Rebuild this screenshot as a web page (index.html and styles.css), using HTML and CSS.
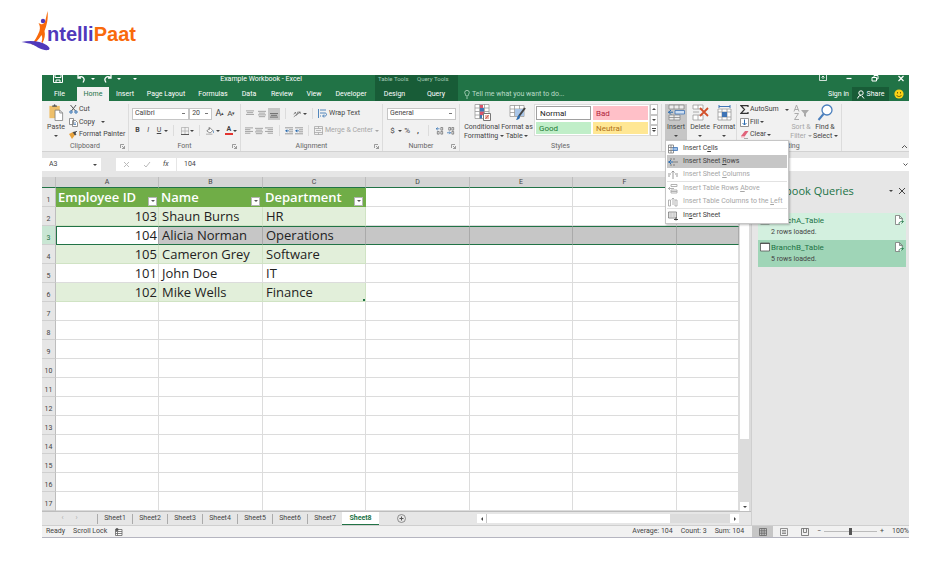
FILE: index.html
```html
<!DOCTYPE html>
<html lang="en">
<head>
    <meta charset="utf-8">
    <title>Example Workbook - Excel</title>
    <link rel="stylesheet" href="styles.css">
</head>
<body>

<!-- shared icons -->
<svg class="sprite" aria-hidden="true">
    <symbol id="alignLines" viewBox="0 0 9 9"><path d="M0 1.5h9M1 3.5h7M0 5.5h9M1 7.5h7" stroke="#999" stroke-width="1"/></symbol>
    <symbol id="indent" viewBox="0 0 10 9"><path d="M0 .5h10M5 3h5M5 5.5h5M0 8h10" stroke="#888"/><path d="M0 4.3l3-2v4z" fill="#2b6cb0"/><path d="M3 4.3h2" stroke="#2b6cb0"/></symbol>
    <symbol id="launcher" viewBox="0 0 5 5"><path d="M.5 4V.5H4M2 2l2.5 2.5M4.5 2v2.5H2" fill="none" stroke="#777" stroke-width=".7"/></symbol>
    <symbol id="sheetOut" viewBox="0 0 9 11"><path d="M5 9.500H.5v-9h4l3 3v1.500M4.500.5v3h3" fill="#fff" stroke="#777" stroke-width=".8"/><path d="M4 9c0-2 1-2.500 4-2.500M6.500 5L8.500 6.500l-2 2" fill="none" stroke="#217346" stroke-width=".8"/></symbol>
</svg>

<header class="brand">
    <svg class="brand-mark" viewBox="0 0 28 40">
        <path d="M26 0c1 8-1 15-3 20 1 4 0 8-2 12l-1-1c1-3 1-5 0-7-3 5-7 9-10 10 3-4 6-9 8-14 1-4 0-6-1-8l2 1c2 1 4 0 5-4z" fill="#f96a0b"/>
        <circle cx="21.500" cy="10" r="2.200" fill="#5039bb"/>
        <path d="M0 31c9-2 19-1 25 3 3 2 4 4 2 5-6 1-11-3-15-5-4-2-8-2-12-3z" fill="#5039bb"/>
    </svg>
    <a class="brand-name" href="#">ntelli<span>Paat</span></a>
</header>

<main class="excel">

    <div class="titlebar">
        <div class="quick">
            <svg width="10" height="8" viewBox="0 0 10 8"><path d="M.5 0v7.500h9V0M2 0v2.500h6V0M3 7.500V5h4v2.500" fill="none" stroke="#fff"/></svg>
            <svg width="9" height="8" viewBox="0 0 9 8"><path d="M1 0v3h3M1 3c4-3 8 0 5 4.500" fill="none" stroke="#fff" stroke-width="1.300"/></svg>
            <span class="caret"></span>
            <svg width="9" height="8" viewBox="0 0 9 8"><path d="M8 0v3H5M8 3c-4-3-8 0-5 4.500" fill="none" stroke="#fff" stroke-width="1.300"/></svg>
            <span class="caret"></span>
            <span class="caret"></span>
            <span class="title">Example Workbook - Excel</span>
        </div>
        <span class="context context-table">Table Tools</span>
        <span class="context context-query">Query Tools</span>
        <div class="window-buttons">
            <svg width="8" height="7" viewBox="0 0 8 7"><path d="M.5 0v5.500h7V0M4 1v3M2.500 2.500L4 1l1.500 1.500" fill="none" stroke="#fff" stroke-width=".8"/></svg>
            <svg width="8" height="7" viewBox="0 0 8 7"><path d="M1.500 3.500h5" stroke="#fff" stroke-width="1.200"/></svg>
            <svg width="8" height="7" viewBox="0 0 8 7"><path d="M1 2.500h4.500V6H1zM3 2V.5h4V4H6" fill="none" stroke="#fff"/></svg>
            <svg width="8" height="7" viewBox="0 0 8 7"><path d="M1.500 1l5 5M6.500 1l-5 5" stroke="#fff" stroke-width="1.200"/></svg>
        </div>
    </div>

    <nav class="tabs">
        <button>File</button>
        <button class="current">Home</button>
        <button>Insert</button>
        <button>Page Layout</button>
        <button>Formulas</button>
        <button>Data</button>
        <button>Review</button>
        <button>View</button>
        <button>Developer</button>
        <button class="dark">Design</button>
        <button class="dark">Query</button>
        <div class="tell">
            <svg width="6" height="9" viewBox="0 0 6 9"><path d="M2 6C2 4.500.7 4 .7 2.600a2.300 2.200 0 0 1 4.600 0C5.300 4 4 4.500 4 6zM2 8h2" fill="none" stroke="#b9dcc8" stroke-width=".8"/></svg>
            Tell me what you want to do...
        </div>
        <button class="sign">Sign in</button>
        <button class="share">
            <svg width="8" height="9" viewBox="0 0 8 9"><circle cx="4" cy="3" r="2.200" fill="none" stroke="#fff"/><path d="M.7 8.500C1 6 2.500 5.500 4 5.500M5 6l2 2.500" fill="none" stroke="#fff"/></svg>
            Share
        </button>
        <svg class="smiley" width="10" height="10" viewBox="0 0 10 10"><circle cx="5" cy="5" r="4.600" fill="#fcd116"/><path d="M3.500 3v1.500M6.500 3v1.500M2.500 6c1 2 4 2 5 0" fill="none" stroke="#6b5200" stroke-width=".9"/></svg>
    </nav>

    <section class="ribbon">

        <div class="group clipboard">
            <div class="body">
                <button class="big">
                    <svg width="16" height="17" viewBox="0 0 16 18"><path d="M1 2h11v13H1z" fill="#eebf6a"/><path d="M4 3V1.500h1.500C6 0 7 0 7.500 1.500H9V3z" fill="#555"/><path d="M7 6.500h5l3 3v8H7z" fill="#fff" stroke="#777" stroke-width=".8"/><path d="M12 6.500v3h3" fill="none" stroke="#777" stroke-width=".8"/></svg>
                    Paste<span class="caret"></span>
                </button>
                <div class="stack">
                    <button><svg width="9" height="9" viewBox="0 0 9 9"><path d="M1.500 0l5 6M7 0L2.500 6" stroke="#555"/><circle cx="2" cy="7" r="1.200" fill="none" stroke="#2b6cb0"/><circle cx="7" cy="7" r="1.200" fill="none" stroke="#2b6cb0"/></svg>Cut</button>
                    <button><svg width="9" height="9" viewBox="0 0 9 9"><path d="M.5.5h4v6h-4zM3.500 2.500h3l2 2v4h-5z" fill="#fff" stroke="#777" stroke-width=".8"/><path d="M5 5h2M5 6.500h2" stroke="#2b6cb0" stroke-width=".7"/></svg>Copy <span class="caret spaced"></span></button>
                    <button><svg width="9" height="9" viewBox="0 0 9 9"><path d="M0 4l4-2 2 3-3 4z" fill="#e8a33d"/><path d="M4 2l2 3 1-.5L6 3l2-2" fill="#444" stroke="#444" stroke-width=".8"/></svg>Format Painter</button>
                </div>
            </div>
            <div class="label">Clipboard<svg class="launch"><use href="#launcher"/></svg></div>
        </div>

        <div class="group font">
            <div class="body rows">
                <div class="row">
                    <select class="w-font" aria-label="Font"><option>Calibri</option></select>
                    <select class="w-size" aria-label="Font size"><option>20</option></select>
                    <button class="tool grow">A<sup>▴</sup></button>
                    <button class="tool shrink">A<sup>▾</sup></button>
                </div>
                <div class="row">
                    <button class="tool"><b>B</b></button>
                    <button class="tool"><i>I</i></button>
                    <button class="tool"><u>U</u></button>
                    <span class="caret"></span>
                    <span class="split"></span>
                    <button class="tool"><svg width="9" height="9" viewBox="0 0 9 9"><path d="M.5.5h8v8h-8zM4.500 0v9M0 4.500h9" fill="none" stroke="#aaa" stroke-width=".8"/><path d="M0 8.500h9" stroke="#444"/></svg></button>
                    <span class="caret"></span>
                    <span class="split"></span>
                    <button class="tool"><svg width="10" height="10" viewBox="0 0 10 10"><path d="M1 5l4-4 3.500 3.500-3.500 3zM4 4V0" fill="#fff" stroke="#555" stroke-width=".8"/><path d="M9 4.500c1.500 2 0 3 0 3" stroke="#2b6cb0" fill="none"/><path d="M0 9h8" stroke="#bbb" stroke-width="1.500"/></svg></button>
                    <span class="caret"></span>
                    <button class="tool color">A</button>
                    <span class="caret"></span>
                </div>
            </div>
            <div class="label">Font<svg class="launch"><use href="#launcher"/></svg></div>
        </div>

        <div class="group align">
            <div class="body rows">
                <div class="row">
                    <button class="tool"><svg width="9" height="9" viewBox="0 0 9 9"><path d="M0 1h9M1 3h7M0 5h9" stroke="#999"/></svg></button>
                    <button class="tool"><svg width="9" height="9"><use href="#alignLines"/></svg></button>
                    <button class="tool pressed"><svg width="9" height="9" viewBox="0 0 9 9"><path d="M0 4h9M1 6h7M0 8h9" stroke="#666"/></svg></button>
                    <span class="split"></span>
                    <button class="tool"><svg width="10" height="9" viewBox="0 0 10 9"><path d="M1 8l8-6M6.500 2H9v2.500M1 5l2-3 1 3M5 2c2 0 1 3-1 4" fill="none" stroke="#555" stroke-width=".8"/></svg></button>
                    <span class="caret"></span>
                    <span class="split"></span>
                    <button class="wide"><svg width="9" height="9" viewBox="0 0 9 9"><path d="M.5 0v9M2 1h6M2 4h5c2 0 2 3 0 3H5M6 5.500L4.500 7 6 8.500M2 7h1" fill="none" stroke="#2b6cb0" stroke-width=".8"/></svg>Wrap Text</button>
                </div>
                <div class="row">
                    <button class="tool"><svg width="9" height="9" viewBox="0 0 9 9"><path d="M0 1h9M0 3h6M0 5h9M0 7h6" stroke="#999"/></svg></button>
                    <button class="tool"><svg width="9" height="9"><use href="#alignLines"/></svg></button>
                    <button class="tool"><svg width="9" height="9" viewBox="0 0 9 9"><path d="M0 1h9M3 3h6M0 5h9M3 7h6" stroke="#999"/></svg></button>
                    <span class="split"></span>
                    <button class="tool"><svg width="10" height="9"><use href="#indent"/></svg></button>
                    <button class="tool"><svg width="10" height="9"><use href="#indent"/></svg></button>
                    <span class="split thin"></span>
                    <button class="wide" disabled><svg width="9" height="9" viewBox="0 0 9 9"><path d="M.5.5h8v8h-8zM0 2.500h9M0 6.500h9M4.500 0v2.500M4.500 6.500V9M2 4.500h5" fill="none" stroke="#aaa" stroke-width=".8"/></svg>Merge &amp; Center <span class="caret"></span></button>
                </div>
            </div>
            <div class="label">Alignment<svg class="launch"><use href="#launcher"/></svg></div>
        </div>

        <div class="group number">
            <div class="body rows">
                <div class="row">
                    <select class="w-number" aria-label="Number format"><option>General</option></select>
                </div>
                <div class="row">
                    <button class="tool">$</button>
                    <span class="caret"></span>
                    <button class="tool">%</button>
                    <button class="tool"><b>,</b></button>
                    <span class="split"></span>
                    <button class="tool"><svg width="9" height="9" viewBox="0 0 9 9"><path d="M0 2h4M2 .5L.3 2 2 3.500" fill="none" stroke="#2b6cb0" stroke-width=".8"/><path d="M5.500.5h2v3h-2zM1.500 5h2v3h-2zM5.500 5h2v3h-2z" fill="none" stroke="#666" stroke-width=".8"/></svg></button>
                    <button class="tool"><svg width="9" height="9" viewBox="0 0 9 9"><path d="M0 6.500h4M2.500 5l1.500 1.500L2.500 8" fill="none" stroke="#2b6cb0" stroke-width=".8"/><path d="M2 .5h2v3H2zM5.500.5h2v3h-2zM5.500 5h2v3h-2z" fill="none" stroke="#666" stroke-width=".8"/></svg></button>
                </div>
            </div>
            <div class="label">Number<svg class="launch"><use href="#launcher"/></svg></div>
        </div>

        <div class="group styles">
            <div class="body">
                <button class="big">
                    <svg width="17" height="17" viewBox="0 0 17 17"><path d="M1 .5h14v14H1zM1 4h14M1 7.500h14M1 11h14M5.500 0v15M10.500 0v15" fill="#fff" stroke="#999" stroke-width=".8"/><path d="M6 1h3v3H6zM6 7.500h4V11H6z" fill="#d9536b"/><path d="M6 4h4v3.500H6zM6 11h2v3.500H6z" fill="#3f74b5"/><path d="M9.500 9.500h7v7h-7z" fill="#fff" stroke="#777"/><path d="M11 12h4M11 14h4M14.500 11l-3 4" stroke="#c43" stroke-width=".8"/></svg>
                    Conditional<br>Formatting <span class="caret inline"></span>
                </button>
                <button class="big">
                    <svg width="17" height="17" viewBox="0 0 17 17"><path d="M1 1.500h14v11H1zM1 5h14M1 8.500h14M5.500 1v11M10.500 1v11" fill="#fff" stroke="#999" stroke-width=".8"/><path d="M6 5h9v7H6z" fill="#a9c6e8"/><path d="M16 4l-6 8" stroke="#444" stroke-width="2"/><path d="M10 11c2 1 1 5-3 5 1-1 1-4 3-5z" fill="#2b6cb0"/></svg>
                    Format as<br>Table <span class="caret inline"></span>
                </button>
                <div class="gallery">
                    <button class="normal">Normal</button>
                    <button class="bad">Bad</button>
                    <button class="good">Good</button>
                    <button class="neutral">Neutral</button>
                </div>
                <div class="gallery-nav">
                    <button aria-label="Up"><span class="caret up"></span></button>
                    <button aria-label="Down"><span class="caret"></span></button>
                    <button aria-label="More"><span class="caret more"></span></button>
                </div>
            </div>
            <div class="label">Styles</div>
        </div>

        <div class="group cells" aria-label="Cells">
            <div class="body">
                <div class="insert">
                    <button class="big pressed">
                        <svg width="17" height="17" viewBox="0 0 17 17"><path d="M1 1h15v4H1zM1 11h11v5H1zM6 1v4M11 1v4M6 11v5M1 13.500h11" fill="#eee" stroke="#888" stroke-width=".8"/><path d="M7 6.500h9.500v3.500H7z" fill="#cfe0f3" stroke="#3f74b5" stroke-width=".8"/><path d="M0 8.200h5M3 6L.7 8.200 3 10.500" fill="none" stroke="#2b6cb0"/></svg>
                        Insert<span class="caret"></span>
                    </button>
                    <div class="menu">
                        <button><svg width="10" height="10" viewBox="0 0 10 10"><path d="M.5 1h5v8h-5zM.5 3.500h5M.5 6.500h5M3 1v8" fill="#fff" stroke="#777" stroke-width=".8"/><path d="M5 3.500h4.500v3H5z" fill="#9dbfe6" stroke="#3f74b5" stroke-width=".8"/></svg><span>Insert C<u>e</u>lls</span></button>
                        <button class="hover"><svg width="10" height="10" viewBox="0 0 10 10"><path d="M5 5h5M3 1v2M6 1v2M3 7v2M6 7v2" stroke="#777" stroke-width=".9"/><path d="M0 5h5M3 3L1 5l2 2" fill="none" stroke="#2b6cb0"/></svg><span>Insert Sheet <u>R</u>ows</span></button>
                        <button disabled><svg width="10" height="10" viewBox="0 0 10 10"><path d="M5 1v8M3.500 2.500L5 1l1.500 1.500M0 4h3M7 4h3M0 6h2M8 6h2" fill="none" stroke="#999"/></svg><span>Insert Sheet <u>C</u>olumns</span></button>
                        <button class="ruled" disabled><svg width="10" height="10" viewBox="0 0 10 10"><path d="M3 .5h6v2H3zM3 6h6v3H3zM3 7.500h6M0 4.500h6M2 3L.5 4.500 2 6" fill="none" stroke="#aaa" stroke-width=".9"/></svg><span>Insert Table Rows <u>A</u>bove</span></button>
                        <button disabled><svg width="10" height="10" viewBox="0 0 10 10"><path d="M.5 3h2v6h-2zM7 3h2v6H7zM5 1v7M3.500 2.500L5 1l1.500 1.500" fill="none" stroke="#aaa" stroke-width=".9"/></svg><span>Insert Table Columns to the <u>L</u>eft</span></button>
                        <button class="ruled"><svg width="10" height="10" viewBox="0 0 10 10"><path d="M.5 1h8v6h-8z" fill="#eee" stroke="#777" stroke-width=".8"/><path d="M.5 3h8M.5 5h8M3 1v6M6 1v6" stroke="#bbb" stroke-width=".6"/><path d="M6 8.500h4M8 6.500v3" stroke="#444"/></svg><span>In<u>s</u>ert Sheet</span></button>
                    </div>
                </div>
                <button class="big">
                    <svg width="17" height="17" viewBox="0 0 17 17"><path d="M1 1h10v4H1zM1 11h10v5H1zM6 1v4M6 11v5M1 8h6" fill="#fff" stroke="#999" stroke-width=".8"/><path d="M8 4l8 8M16 4l-8 8" stroke="#d2502a" stroke-width="1.800"/></svg>
                    Delete<span class="caret"></span>
                </button>
                <button class="big">
                    <svg width="17" height="17" viewBox="0 0 17 17"><path d="M2 5h13v11H2zM2 8h13M2 13h13M6 5v11M11 5v11" fill="#fff" stroke="#999" stroke-width=".8"/><path d="M6 8h5v5H6z" fill="#3f74b5"/><path d="M3 1v3M14 1v3M3 2.500h11" stroke="#3f74b5"/></svg>
                    Format<span class="caret"></span>
                </button>
            </div>
        </div>

        <div class="group editing">
            <div class="body">
                <div class="stack">
                    <button><svg width="9" height="9" viewBox="0 0 9 9"><path d="M8 2V.7H1L4.500 4.500 1 8.300h7V7" fill="none" stroke="#333" stroke-width="1.200"/></svg>AutoSum <span class="caret spaced"></span></button>
                    <button><svg width="9" height="9" viewBox="0 0 9 9"><path d="M.5.5h8v8h-8z" fill="#fff" stroke="#777" stroke-width=".8"/><path d="M4.500 1.500V7M2.500 5l2 2 2-2" fill="none" stroke="#2b6cb0"/></svg>Fill <span class="caret"></span></button>
                    <button><svg width="9" height="9" viewBox="0 0 9 9"><path d="M1 6l4-5h3.500L5 6z" fill="#e0637a"/><path d="M1 6h4v1.500H1z" fill="#f3b3be"/><path d="M4 8.500h4" stroke="#888" stroke-width=".7"/></svg>Clear <span class="caret"></span></button>
                </div>
                <button class="big" disabled>
                    <svg width="17" height="17" viewBox="0 0 17 17"><path d="M1 7.500L3.500 1 6 7.500M2 5.500h3M1.500 9.500h4l-4 6h4.500" fill="none" stroke="#aaa"/><path d="M8 6h8l-3 3.500V13l-2-1V9.500z" fill="#aaa"/></svg>
                    Sort &amp;<br>Filter <span class="caret inline"></span>
                </button>
                <button class="big">
                    <svg width="17" height="17" viewBox="0 0 17 17"><circle cx="10" cy="6" r="5" fill="#fff" stroke="#4a7fbd" stroke-width="1.300"/><path d="M6.500 10L1.500 16" stroke="#4a7fbd" stroke-width="2"/></svg>
                    Find &amp;<br>Select <span class="caret inline"></span>
                </button>
            </div>
            <div class="label">Editing</div>
        </div>

        <svg class="collapse" width="7" height="5" viewBox="0 0 7 5"><path d="M1 4l2.500-2.500L6 4" fill="none" stroke="#555"/></svg>
    </section>

    <div class="formula-bar">
        <div class="name-wrap">
            <input class="name-box" aria-label="Name box" value="A3">
            <span class="caret"></span>
        </div>
        <div class="fx">
            <svg width="8" height="7" viewBox="0 0 8 7"><path d="M1 1l5 5M6 1L1 6" stroke="#bbb"/></svg>
            <svg width="8" height="7" viewBox="0 0 8 7"><path d="M1 4l2 2 4-5" fill="none" stroke="#bbb"/></svg>
            <i>fx</i>
        </div>
        <input class="formula" aria-label="Formula" value="104">
        <svg class="expand" width="7" height="5" viewBox="0 0 7 5"><path d="M1.500 1.500l2 2 2-2" fill="none" stroke="#555"/></svg>
    </div>

    <div class="work">
        <div class="sheet">
            <div class="grid">
                <table>
                    <colgroup><col class="c-num"><col class="c-odd"><col class="c-even"><col class="c-odd"><col class="c-even"><col class="c-odd"><col class="c-even"><col></colgroup>
                    <thead>
                        <tr><th class="corner"></th><th>A</th><th>B</th><th>C</th><th>D</th><th>E</th><th>F</th><th></th></tr>
                    </thead>
                    <tbody>
                        <tr class="head"><th>1</th><td><div>Employee ID<button aria-label="Filter ID"><span class="caret"></span></button></div></td><td><div>Name<button aria-label="Filter name"><span class="caret"></span></button></div></td><td><div>Department<button aria-label="Filter department"><span class="caret"></span></button></div></td><td></td><td></td><td></td><td></td></tr>
                        <tr class="band"><th>2</th><td>103</td><td>Shaun Burns</td><td>HR</td><td></td><td></td><td></td><td></td></tr>
                        <tr class="selected"><th>3</th><td>104</td><td>Alicia Norman</td><td>Operations</td><td></td><td></td><td></td><td></td></tr>
                        <tr class="band"><th>4</th><td>105</td><td>Cameron Grey</td><td>Software</td><td></td><td></td><td></td><td></td></tr>
                        <tr><th>5</th><td>101</td><td>John Doe</td><td>IT</td><td></td><td></td><td></td><td></td></tr>
                        <tr class="band last"><th>6</th><td>102</td><td>Mike Wells</td><td>Finance</td><td></td><td></td><td></td><td></td></tr>
                        <tr><th>7</th><td></td><td></td><td></td><td></td><td></td><td></td><td></td></tr>
                        <tr><th>8</th><td></td><td></td><td></td><td></td><td></td><td></td><td></td></tr>
                        <tr><th>9</th><td></td><td></td><td></td><td></td><td></td><td></td><td></td></tr>
                        <tr><th>10</th><td></td><td></td><td></td><td></td><td></td><td></td><td></td></tr>
                        <tr><th>11</th><td></td><td></td><td></td><td></td><td></td><td></td><td></td></tr>
                        <tr><th>12</th><td></td><td></td><td></td><td></td><td></td><td></td><td></td></tr>
                        <tr><th>13</th><td></td><td></td><td></td><td></td><td></td><td></td><td></td></tr>
                        <tr><th>14</th><td></td><td></td><td></td><td></td><td></td><td></td><td></td></tr>
                        <tr><th>15</th><td></td><td></td><td></td><td></td><td></td><td></td><td></td></tr>
                        <tr><th>16</th><td></td><td></td><td></td><td></td><td></td><td></td><td></td></tr>
                        <tr><th>17</th><td></td><td></td><td></td><td></td><td></td><td></td><td></td></tr>
                    </tbody>
                </table>
                <div class="vscroll"><div class="thumb"></div><button aria-label="Scroll down"><span class="caret"></span></button></div>
            </div>
            <div class="sheet-tabs">
                <span class="arrows"><span>‹</span><span>›</span></span>
                <button>Sheet1</button>
                <button>Sheet2</button>
                <button>Sheet3</button>
                <button>Sheet4</button>
                <button>Sheet5</button>
                <button>Sheet6</button>
                <button>Sheet7</button>
                <button class="current">Sheet8</button>
                <button class="add" aria-label="New sheet"><svg width="9" height="9" viewBox="0 0 9 9"><circle cx="4.500" cy="4.500" r="4" fill="none" stroke="#777" stroke-width=".8"/><path d="M4.500 2.500v4M2.500 4.500h4" stroke="#555"/></svg></button>
                <div class="hscroll">
                    <button aria-label="Scroll left"><span class="caret left"></span></button>
                    <div class="thumb"></div>
                    <button aria-label="Scroll right"><span class="caret right"></span></button>
                </div>
            </div>
        </div>

        <aside class="queries">
            <div class="queries-head">
                <h2>Workbook Queries</h2>
                <span class="caret"></span>
                <svg width="8" height="8" viewBox="0 0 8 8"><path d="M1 1l6 6M7 1L1 7" stroke="#444"/></svg>
            </div>
            <div class="query">
                <svg width="10" height="10" viewBox="0 0 10 10"><path d="M.5 1h9v8h-9z" fill="#fff" stroke="#555" stroke-width=".8"/><path d="M0 1.500h10" stroke="#555"/></svg>
                <div><a href="#">BranchA_Table</a><p>2 rows loaded.</p></div>
                <svg width="9" height="11"><use href="#sheetOut"/></svg>
            </div>
            <div class="query active">
                <svg width="10" height="10" viewBox="0 0 10 10"><path d="M.5 1h9v8h-9z" fill="#fff" stroke="#555" stroke-width=".8"/><path d="M0 1.500h10" stroke="#555"/></svg>
                <div><a href="#">BranchB_Table</a><p>5 rows loaded.</p></div>
                <svg width="9" height="11"><use href="#sheetOut"/></svg>
            </div>
        </aside>
    </div>

    <footer class="status">
        <span>Ready</span>
        <span>Scroll Lock</span>
        <svg width="8" height="8" viewBox="0 0 8 8"><path d="M.5 1.500h6.500v6H.5zM.5 3.500h6.500M2.500 3.500v4M.5 5.500h6.500" fill="#fff" stroke="#666" stroke-width=".8"/><circle cx="2" cy="1.500" r="1.500" fill="#555"/></svg>
        <span class="push">Average: 104</span>
        <span>Count: 3</span>
        <span>Sum: 104</span>
        <div class="views">
            <button class="pressed" aria-label="Normal view"><svg width="8" height="8" viewBox="0 0 8 8"><path d="M.5.5h7v7h-7zM.5 2.800h7M.5 5.200h7M2.800.5v7M5.200.5v7" fill="none" stroke="#666" stroke-width=".8"/></svg></button>
            <button aria-label="Page layout view"><svg width="8" height="8" viewBox="0 0 8 8"><path d="M.5.5h7v7h-7zM2 2.500h4M2 4h4M2 5.500h4" fill="none" stroke="#777" stroke-width=".8"/></svg></button>
            <button aria-label="Page break view"><svg width="8" height="8" viewBox="0 0 8 8"><path d="M.5.5h7v7h-7zM2.500.5v4h3v-4" fill="none" stroke="#666" stroke-width=".8"/></svg></button>
        </div>
        <div class="zoom">
            <span>−</span>
            <input type="range" min="10" max="190" value="100" aria-label="Zoom">
            <span>+</span>
        </div>
        <span>100%</span>
    </footer>
</main>

</body>
</html>
```
FILE: styles.css
```css
* {
    box-sizing: border-box;
}
body {
    margin: 0;
    background: #fff;
    color: #444;
    font: 7px/9px Roboto, "Open Sans", sans-serif;
}
button, input, select {
    margin: 0;
    padding: 0;
    border: none;
    border-radius: 0;
    background: none;
    color: inherit;
    font: inherit;
}
button {
    display: flex;
    align-items: center;
    white-space: nowrap;
}
svg {
    display: block;
    flex: none;
}
.sprite {
    position: absolute;
    width: 0;
    height: 0;
}

/* small drop-down arrow */
.caret {
    flex: none;
    width: 4px;
    border: 2px solid transparent;
    border-top-color: currentColor;
    border-bottom: none;
}
.caret.spaced {
    margin-left: 5px;
}
.caret.inline {
    display: inline-block;
    vertical-align: middle;
}
.caret.up {
    border-top: none;
    border-bottom: 2px solid currentColor;
}
.caret.left {
    width: 2px;
    border: 2px solid transparent;
    border-right-color: currentColor;
    border-left: none;
}
.caret.right {
    width: 2px;
    border: 2px solid transparent;
    border-left-color: currentColor;
    border-right: none;
}
.caret.more::before {
    content: "";
    display: block;
    width: 4px;
    height: 1px;
    margin: -4px 0 0 -2px;
    background: currentColor;
}

/* logo */
.brand {
    display: flex;
    height: 75px;
    padding: 11px 21px;
}
.brand-mark {
    width: 29px;
    height: 40px;
}
.brand-name {
    margin: 10px 0 0 -3px;
    color: #5039bb;
    font: bold 20px/27px "Liberation Sans", sans-serif;
    text-decoration: none;
}
.brand-name span {
    color: #f96a0b;
}

.excel {
    margin: 0 42px;
    background: #e6e6e6;
}

/* title bar and tabs */
.titlebar {
    display: flex;
    height: 12px;
    background: #217346;
    color: #fff;
    line-height: 8px;
    overflow: hidden;
}
.quick {
    display: flex;
    gap: 8px;
    width: 333px;
    padding-left: 11px;
}
.quick svg + svg {
    margin-left: 6px;
}
.quick .caret {
    margin: 3px 0 0 -3px;
}
.quick .caret + .caret {
    margin-left: 4px;
}
.title {
    margin-left: auto;
    padding-right: 73px;
}
.context {
    padding: 0 3px;
    background: #185c37;
    color: #a5cdb6;
    font-size: 6px;
    white-space: nowrap;
}
.context-table {
    width: 39px;
}
.context-query {
    width: 44px;
}
.window-buttons {
    display: flex;
    gap: 18px;
    margin-left: auto;
    padding-right: 4px;
}
.tabs {
    display: grid;
    grid-template-columns: 35px 32px 32px 50px 44px 28px 38px 26px 48px 39px 44px 1fr 27px 37px 20px;
    align-items: center;
    height: 14px;
    background: #217346;
    color: #fff;
}
.tabs button {
    justify-content: center;
    height: 14px;
}
.tabs .current {
    background: #f1f1f1;
    color: #217346;
}
.tabs .dark {
    background: #185c37;
}
.tabs .share {
    gap: 2px;
    background: #185c37;
}
.smiley {
    justify-self: center;
}
.tell {
    display: flex;
    align-items: center;
    gap: 2px;
    padding-left: 6px;
    color: #b9dcc8;
}

/* ribbon */
.ribbon {
    display: flex;
    padding: 3px 0 0;
    border-bottom: 1px solid #d2d2d2;
    background: #f1f1f1;
}
.group {
    flex: none;
    border-right: 1px solid #dcdcdc;
}
.clipboard { width: 87px; }
.font { width: 112px; }
.align { width: 142px; }
.number { width: 77px; }
.styles { width: 202px; }
.cells { width: 75px; }
.editing { width: 105px; }
.body {
    display: flex;
    height: 37px;
    padding: 0 3px;
}
.label {
    display: flex;
    align-items: center;
    justify-content: center;
    height: 10px;
    color: #666;
}
.launch {
    width: 5px;
    height: 5px;
    margin: 0 3px 0 auto;
}
.label:has(.launch)::before {
    content: "";
    width: 8px;
    margin-right: auto;
}
.big {
    display: block;
    flex: none;
    height: 37px;
    line-height: 9px;
    text-align: center;
}
.big svg {
    margin: 0 auto 2px;
}
.big > .caret:not(.inline) {
    display: block;
    margin: 3px auto 4px;
}
.pressed {
    background: #c6c6c6;
}
button:disabled {
    color: #a6a6a6;
}
.stack {
    display: flex;
    flex-direction: column;
    justify-content: space-between;
    height: 36px;
}
.stack button {
    gap: 1px;
    height: 11px;
}
.clipboard .big {
    width: 22px;
    margin-right: 2px;
}
.rows {
    flex-direction: column;
    gap: 4px;
    padding-top: 3px;
}
.row {
    display: flex;
    align-items: center;
    height: 13px;
}
.tool {
    justify-content: center;
    width: 12px;
    height: 12px;
}
.tool svg {
    width: 8px;
    height: 8px;
}
.tool sup {
    font-size: 5px;
    line-height: 5px;
}
.grow {
    margin-left: 2px;
    font-size: 9px;
}
.shrink {
    font-size: 8px;
}
.color {
    height: 9px;
    width: 9px;
    margin-left: 5px;
    border-bottom: 2px solid #e3342f;
    font-weight: bold;
}
.split {
    width: 1px;
    height: 11px;
    margin: 0 5px;
    background: #dcdcdc;
}
.split.thin {
    margin: 0 5px 0 4px;
}
.wide {
    gap: 2px;
}
select {
    height: 12px;
    padding: 0 2px;
    border: 1px solid #c6c6c6;
    appearance: none;
    background: #fff linear-gradient(#777, #777) no-repeat right 3px center / 3px 1px;
}
.w-font { width: 60px; }
.w-size { width: 24px; }
.w-number { width: 71px; }
.number .row {
    padding-left: 1px;
}
.number .tool {
    font-size: 8px;
}
.styles .body {
    padding: 0 3px 0 4px;
}
.styles .big {
    width: 36px;
}
.styles .big + .big {
    width: 34px;
}
.gallery {
    display: grid;
    grid-template-columns: 1fr 1fr;
    gap: 2px;
    flex: 1;
    height: 32px;
    padding: 1px;
    border: 1px solid #dcdcdc;
    background: #fff;
    font-size: 8px;
}
.gallery button {
    padding: 0 3px;
}
.gallery .normal {
    border: 1px solid #a0a0a0;
    color: #222;
}
.bad { background: #ffc0c8; color: #b0243a; }
.good { background: #c0eec8; color: #1d7a35; }
.neutral { background: #ffe794; color: #b0711a; }
.gallery-nav {
    display: grid;
    width: 8px;
    height: 32px;
}
.gallery-nav button {
    justify-content: center;
    border: 1px solid #c6c6c6;
    background: #fff;
}
.cells .body {
    gap: 2px;
}
.cells .big {
    width: 22px;
}
.insert {
    position: relative;
}
.menu {
    position: absolute;
    z-index: 2;
    top: 36px;
    left: 0;
    width: 124px;
    padding: 1px;
    border: 1px solid #c6c6c6;
    background: #fff;
    box-shadow: 1px 1px 2px rgba(0, 0, 0, 0.25);
}
.menu button {
    gap: 5px;
    width: 100%;
    height: 13px;
    padding-left: 1px;
}
.menu .hover {
    background: #c6c6c6;
}
.menu .ruled {
    height: 14px;
    border-top: 1px solid #e2e2e2;
}
.editing .stack {
    width: 49px;
}
.editing .big {
    width: 24px;
}
.collapse {
    margin: auto 1px 2px auto;
}

/* formula bar */
.formula-bar {
    display: flex;
    height: 25px;
    padding: 6px 0;
}
.formula-bar > * {
    background: #fff;
}
.name-wrap {
    display: flex;
    align-items: center;
    width: 59px;
    margin-right: 15px;
    padding: 0 4px 0 7px;
}
.name-box {
    flex: 1;
    width: 0;
}
.fx {
    display: flex;
    align-items: center;
    gap: 12px;
    width: 60px;
    margin-right: 1px;
    padding-left: 7px;
}
.formula {
    flex: 1;
    padding-left: 7px;
}
.expand {
    height: 13px;
}

/* sheet */
.work {
    display: flex;
}
.sheet {
    flex: 1;
}
.grid {
    display: flex;
}
table {
    flex: 1;
    width: 0;
    border-collapse: separate;
    border-spacing: 0;
    table-layout: fixed;
    background: #fff;
}
.c-num { width: 14px; }
.c-odd { width: 103px; }
.c-even { width: 104px; }
th {
    padding: 0;
    border-right: 1px solid #bdbdbd;
    border-bottom: 1px solid #cfcfcf;
    background: #e6e6e6;
    font-weight: normal;
}
thead th {
    height: 11px;
    border-bottom: 1px solid #217346;
    background: #d5d5d5;
    line-height: 8px;
}
tbody th {
    padding-top: 6px;
}
td {
    height: 19px;
    padding: 0 2px 0 3px;
    border-right: 1px solid #dcdcdc;
    border-bottom: 1px solid #dcdcdc;
    color: #222;
    font: 13px/17px "Open Sans", "Noto Sans", sans-serif;
    white-space: nowrap;
}
td:nth-child(2) {
    padding-right: 1px;
    text-align: right;
}
.band td:nth-child(-n+4) {
    border-color: #d0e3c4;
    background: #e2efda;
}
.band.last td:nth-child(4) {
    background: linear-gradient(#217346, #217346) no-repeat right bottom / 2px 2px #e2efda;
}
.head td:nth-child(-n+4) {
    padding-left: 2px;
    border-color: #70ad47;
    background: #70ad47;
    color: #fff;
    font-weight: 600;
}
.head div {
    display: flex;
    align-items: flex-end;
    justify-content: space-between;
}
.head button {
    justify-content: center;
    width: 9px;
    height: 9px;
    border: 1px solid #b5b5b5;
    background: #fff;
    color: #555;
}
.selected td {
    border-color: #aaa;
    border-top: 1px solid #217346;
    border-bottom: 1px solid #217346;
    background: #c6c6c6;
    line-height: 15px;
}
.selected td:nth-child(2) {
    border-left: 1px solid #217346;
    background: #fff;
}
.selected th {
    background: #c9e6d4;
    color: #217346;
}
.vscroll {
    display: flex;
    flex-direction: column;
    justify-content: space-between;
    width: 12px;
    padding: 10px 2px 0 1px;
    background: #dcdcdc;
}
.vscroll .thumb {
    height: 252px;
    background: #fff;
}
.vscroll button, .hscroll button {
    justify-content: center;
    width: 9px;
    height: 9px;
    background: #fff;
}
.sheet-tabs {
    display: flex;
    align-items: center;
    height: 14px;
    padding-right: 12px;
    border-top: 1px solid #bdbdbd;
}
.arrows {
    display: flex;
    justify-content: center;
    gap: 12px;
    width: 55px;
    color: #aaa;
}
.sheet-tabs > button {
    justify-content: center;
    width: 35px;
    height: 10px;
    border-left: 1px solid #ababab;
}
.sheet-tabs > .current {
    width: 37px;
    height: 13px;
    align-self: flex-start;
    border-left: none;
    border-bottom: 1px solid #217346;
    background: #fff;
    color: #217346;
    font-weight: bold;
}
.sheet-tabs > .add {
    width: 45px;
    border: none;
}
.hscroll {
    display: flex;
    flex: 1;
    justify-content: space-between;
    margin-left: 53px;
    background: #dcdcdc;
}
.hscroll .thumb {
    width: 184px;
    margin-right: auto;
    border-left: 1px solid #c6c6c6;
    background: #fff;
}

/* queries panel */
.queries {
    width: 158px;
    padding: 0 3px 0 6px;
    border-left: 1px solid #cfcfcf;
}
.queries-head {
    display: flex;
    align-items: center;
    gap: 5px;
    height: 36px;
    padding-bottom: 8px;
}
h2 {
    flex: 1;
    margin: 0;
    color: #217346;
    font: 11px/14px "Open Sans", sans-serif;
}
.query {
    display: flex;
    gap: 1px;
    height: 27px;
    padding: 2px;
    background: #d3f0df;
    line-height: 11px;
}
.query > div {
    flex: 1;
}
.query a {
    color: #217346;
    font-size: 8px;
    text-decoration: none;
}
.query p {
    margin: 0;
}
.query.active {
    background: #9fd5b7;
}

/* status bar */
.status {
    display: flex;
    align-items: center;
    gap: 8px;
    height: 13px;
    padding-left: 4px;
    border-top: 1px solid #cfcfcf;
    border-bottom: 1px solid #b5b5c0;
    background: #f1f1f1;
    white-space: nowrap;
}
.push {
    margin-left: auto;
}
.views {
    display: flex;
}
.views button {
    justify-content: center;
    width: 21px;
    height: 11px;
}
.zoom {
    display: flex;
    align-items: center;
    gap: 3px;
    margin-left: -6px;
}
.zoom input {
    width: 53px;
    height: 8px;
    appearance: none;
    background: linear-gradient(#bbb, #bbb) no-repeat center / 100% 1px;
}
.zoom input::-webkit-slider-thumb {
    width: 3px;
    height: 7px;
    appearance: none;
    background: #555;
}
```
